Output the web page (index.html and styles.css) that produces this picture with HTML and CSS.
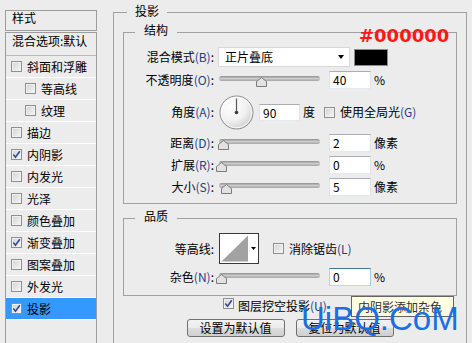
FILE: index.html
```html
<!DOCTYPE html>
<html lang="zh-CN">
<head>
    <meta charset="UTF-8">
    <meta name="viewport" content="width=device-width, initial-scale=1.0">
    <title>图层样式 - 投影</title>
    <link rel="stylesheet" href="styles.css">
</head>
<body>
    <div class="dialog">
        <div class="sidebar">
            <div class="sidebar-title">样式</div>
            <ul class="effect-list">
                <li class="blend">混合选项:默认</li>
                <li><span class="check"></span>斜面和浮雕</li>
                <li class="sub"><span class="check"></span>等高线</li>
                <li class="sub"><span class="check"></span>纹理</li>
                <li><span class="check"></span>描边</li>
                <li><span class="check"><svg viewBox="0 0 9 9"><path d="M1.3 4.6 L3.5 7.2 L7.8 1.2" /></svg></span>内阴影</li>
                <li><span class="check"></span>内发光</li>
                <li><span class="check"></span>光泽</li>
                <li><span class="check"></span>颜色叠加</li>
                <li><span class="check"><svg viewBox="0 0 9 9"><path d="M1.3 4.6 L3.5 7.2 L7.8 1.2" /></svg></span>渐变叠加</li>
                <li><span class="check"></span>图案叠加</li>
                <li><span class="check"></span>外发光</li>
                <li class="active"><span class="check"><svg viewBox="0 0 9 9"><path d="M1.3 4.6 L3.5 7.2 L7.8 1.2" /></svg></span>投影</li>
            </ul>
        </div>

        <div class="panel">
            <div class="group group-main">
                <div class="group-title">投影</div>

                <div class="group group-sub">
                    <div class="group-title">结构</div>

                    <div class="row row-blend">
                        <span class="label">混合模式<span class="key">(B)</span>:</span>
                        <div class="select">正片叠底<span class="arrow"></span></div>
                        <span class="swatch"></span>
                    </div>

                    <div class="row row-opacity">
                        <span class="label">不透明度<span class="key">(O)</span>:</span>
                        <div class="slider">
                            <span class="track"></span>
                            <svg class="thumb" style="left: 40%" viewBox="0 0 11 10"><polygon points="5.5,0.5 10.5,4.5 10.5,9.5 0.5,9.5 0.5,4.5" /></svg>
                        </div>
                        <span class="field">40</span>
                        <span class="unit">%</span>
                    </div>

                    <div class="row row-angle">
                        <span class="label">角度<span class="key">(A)</span>:</span>
                        <svg class="dial" viewBox="0 0 35 35">
                            <defs>
                                <radialGradient id="dialFill" cx="35%" cy="30%" r="75%">
                                    <stop offset="0" stop-color="#ffffff" />
                                    <stop offset="0.6" stop-color="#f1f1f1" />
                                    <stop offset="1" stop-color="#cfcfcf" />
                                </radialGradient>
                            </defs>
                            <circle cx="17.5" cy="17.5" r="16.5" fill="url(#dialFill)" stroke="#8b8b8b" />
                            <circle cx="17.5" cy="17.5" r="15.3" fill="none" stroke="#fbfbfb" />
                            <line x1="17.5" y1="17.5" x2="17.5" y2="3.5" stroke="#5a5a5a" stroke-width="1.2" />
                            <circle cx="17.5" cy="17.5" r="1.8" fill="#3c3c3c" />
                        </svg>
                        <span class="field field-angle">90</span>
                        <span class="unit">度</span>
                        <span class="option option-global"><span class="check"></span>使用全局光<span class="key">(G)</span></span>
                    </div>

                    <div class="row row-distance">
                        <span class="label">距离<span class="key">(D)</span>:</span>
                        <div class="slider">
                            <span class="track"></span>
                            <svg class="thumb" style="left: 2%" viewBox="0 0 11 10"><polygon points="5.5,0.5 10.5,4.5 10.5,9.5 0.5,9.5 0.5,4.5" /></svg>
                        </div>
                        <span class="field">2</span>
                        <span class="unit">像素</span>
                    </div>

                    <div class="row">
                        <span class="label">扩展<span class="key">(R)</span>:</span>
                        <div class="slider">
                            <span class="track"></span>
                            <svg class="thumb" style="left: 0%" viewBox="0 0 11 10"><polygon points="5.5,0.5 10.5,4.5 10.5,9.5 0.5,9.5 0.5,4.5" /></svg>
                        </div>
                        <span class="field">0</span>
                        <span class="unit">%</span>
                    </div>

                    <div class="row">
                        <span class="label">大小<span class="key">(S)</span>:</span>
                        <div class="slider">
                            <span class="track"></span>
                            <svg class="thumb" style="left: 5%" viewBox="0 0 11 10"><polygon points="5.5,0.5 10.5,4.5 10.5,9.5 0.5,9.5 0.5,4.5" /></svg>
                        </div>
                        <span class="field">5</span>
                        <span class="unit">像素</span>
                    </div>
                </div>

                <div class="group group-sub group-quality">
                    <div class="group-title">品质</div>

                    <div class="row row-contour">
                        <span class="label">等高线:</span>
                        <svg class="contour" viewBox="0 0 40 31">
                            <rect x="0.5" y="0.5" width="39" height="30" fill="#fff" stroke="#3a3a3a" />
                            <polygon points="2.5,28.5 29,2.5 29,28.5" fill="#a2a2a2" />
                            <polygon points="32,14 37,14 34.5,17" fill="#000" />
                        </svg>
                        <span class="option option-aa"><span class="check"></span>消除锯齿<span class="key">(L)</span></span>
                    </div>

                    <div class="row row-noise">
                        <span class="label">杂色<span class="key">(N)</span>:</span>
                        <div class="slider">
                            <span class="track"></span>
                            <svg class="thumb" style="left: 0%" viewBox="0 0 11 10"><polygon points="5.5,0.5 10.5,4.5 10.5,9.5 0.5,9.5 0.5,4.5" /></svg>
                        </div>
                        <span class="field field-focus">0</span>
                        <span class="unit">%</span>
                    </div>
                </div>

                <div class="knockout">
                    <span class="check"><svg viewBox="0 0 9 9"><path d="M1.3 4.6 L3.5 7.2 L7.8 1.2" /></svg></span>
                    <span class="knockout-text">图层挖空投影<span class="key">(U)</span></span>
                </div>

                <div class="buttons">
                    <button type="button">设置为默认值</button>
                    <button type="button">复位为默认值</button>
                </div>
            </div>
        </div>
    </div>

    <div class="hex">#000000</div>
    <div class="tooltip">内阴影添加杂色</div>
    <div class="watermark">UiBQ.CoM</div>
</body>
</html>
```

FILE: styles.css
```css
* {
    margin: 0;
    padding: 0;
    box-sizing: border-box;
}

body {
    font-family: "Noto Sans CJK SC", sans-serif;
    font-size: 12px;
    line-height: 16px;
    color: #000;
    background: #ececec;
    overflow: hidden;
}

.dialog {
    display: flex;
    align-items: flex-start;
    padding: 10px 0 0 5px;
}

/* left list of effects */

.sidebar {
    width: 92px;
    flex: none;
}

.sidebar-title {
    height: 21px;
    padding-left: 6px;
    border: 1px solid #9d9d9d;
    line-height: 13px;
}

.effect-list {
    list-style: none;
    margin-top: 1px;
    height: 330px;
    border: 1px solid #9d9d9d;
}

.effect-list li {
    display: flex;
    align-items: center;
    height: 22px;
    padding-left: 5px;
    border-bottom: 1px solid #fff;
}

.effect-list li.blend {
    height: 23px;
    align-items: flex-start;
    padding-left: 6px;
    border-bottom-color: #b9b9b9;
}

.effect-list li.sub {
    padding-left: 19px;
}

.effect-list li.active {
    background: #3399ff;
}

.effect-list .check {
    margin-right: 5px;
}

/* checkbox */

.check {
    display: flex;
    flex: none;
    width: 11px;
    height: 11px;
    border: 1px solid #8e8f8f;
    background: linear-gradient(135deg, #d2d2d2, #f6f6f6);
    box-shadow: inset 0 0 0 1px #f1f1f1;
}

.check svg {
    width: 9px;
    height: 9px;
}

.check path {
    fill: none;
    stroke: #34489b;
    stroke-width: 1.6;
}

/* right panel */

.panel {
    width: 354px;
    margin: 2px 0 0 16px;
    flex: none;
}

.group {
    border: 1px solid #a0a0a0;
}

.group-title {
    width: fit-content;
    line-height: 14px;
    background: #ececec;
}

.group-main {
    padding-bottom: 30px;
}

.group-main > .group-title {
    margin: -9px 0 0 13px;
    padding: 0 8px;
}

.group-sub {
    margin: 14px 9px 0;
    padding-bottom: 5px;
}

.group-sub > .group-title {
    margin: -10px 0 0 11px;
    padding: 0 9px;
}

.group-quality {
    padding-bottom: 7px;
}

.row {
    display: flex;
    align-items: center;
    height: 22px;
}

.label {
    flex: none;
    width: 90px;
    margin-right: 4px;
    text-align: right;
    white-space: nowrap;
}

.key {
    color: #1f3d86;
}

.row-blend {
    margin-top: 9px;
}

.row-opacity {
    margin-top: 1px;
}

.row-angle {
    height: 34px;
    margin-top: 4px;
}

.row-distance {
    margin-top: 3px;
}

.row-contour {
    height: 31px;
    margin-top: 10px;
}

.row-noise {
    margin-top: 2px;
}

.select {
    display: flex;
    justify-content: space-between;
    align-items: center;
    width: 132px;
    height: 20px;
    padding: 0 5px 0 6px;
    background: #fff;
    border: 1px solid #d8d8d8;
}

.select .arrow {
    width: 0;
    height: 0;
    border-left: 3px solid transparent;
    border-right: 3px solid transparent;
    border-top: 4px solid #000;
}

.swatch {
    width: 34px;
    height: 17px;
    margin-left: 4px;
    background: #000;
    border: 1px solid #8c8c8c;
}

.slider {
    position: relative;
    width: 101px;
    height: 22px;
    margin-left: 1px;
}

.track {
    display: block;
    height: 5px;
    margin-top: 7px;
    border-radius: 3px;
    background: linear-gradient(#8e8e8e, #cbcbcb 50%, #a5a5a5);
}

.thumb {
    position: absolute;
    top: 8px;
    width: 11px;
    height: 10px;
    margin-left: -3px;
}

.thumb polygon {
    fill: #e2e2e2;
    stroke: #7b7b7b;
}

.field {
    width: 42px;
    height: 18px;
    margin-left: 9px;
    padding-left: 3px;
    background: #fff;
    border: 1px solid;
    border-color: #abadb3 #e2e3ea #e3e9ef #e2e3ea;
    line-height: 16px;
}

.field-angle {
    width: 41px;
    height: 17px;
    margin-left: 5px;
    line-height: 15px;
}

.field-focus {
    border-color: #3d7bad #a4c9e3 #b7d9ed #b5cfe7;
}

.unit {
    margin-left: 3px;
}

.dial {
    width: 35px;
    height: 35px;
    margin-left: 1px;
}

.option {
    display: flex;
    align-items: center;
}

.option .check {
    margin-right: 5px;
}

.option-global {
    margin-left: 9px;
}

.contour {
    width: 40px;
    height: 31px;
    margin-left: 1px;
}

.option-aa {
    margin-left: 14px;
}

.knockout {
    display: flex;
    align-items: flex-start;
    height: 16px;
    padding-left: 109px;
}

.knockout .check {
    margin: 2px 4px 0 0;
}

.knockout-text {
    margin-top: 2px;
}

.buttons {
    display: flex;
    justify-content: center;
    gap: 11px;
    margin-top: 7px;
}

button {
    width: 98px;
    height: 18px;
    font: inherit;
    line-height: 16px;
    color: #000;
    border: 1px solid #707070;
    border-radius: 3px;
    background: linear-gradient(#f3f3f3, #ebebeb 50%, #dddddd 50%, #cfcfcf);
}

/* overlays */

.hex {
    position: absolute;
    left: 359px;
    top: 27px;
    font: bold 18px/18px "DejaVu Sans", sans-serif;
    color: #ff1616;
}

.tooltip {
    position: absolute;
    left: 351px;
    top: 296px;
    width: 103px;
    height: 21px;
    padding-left: 6px;
    line-height: 19px;
    color: #3a2d2d;
    background: #ffffe1;
    border: 1px solid #646464;
}

.watermark {
    position: absolute;
    left: 301px;
    top: 302px;
    font: 33px/33px "Liberation Sans", sans-serif;
    color: #1a6fe3;
}
```
